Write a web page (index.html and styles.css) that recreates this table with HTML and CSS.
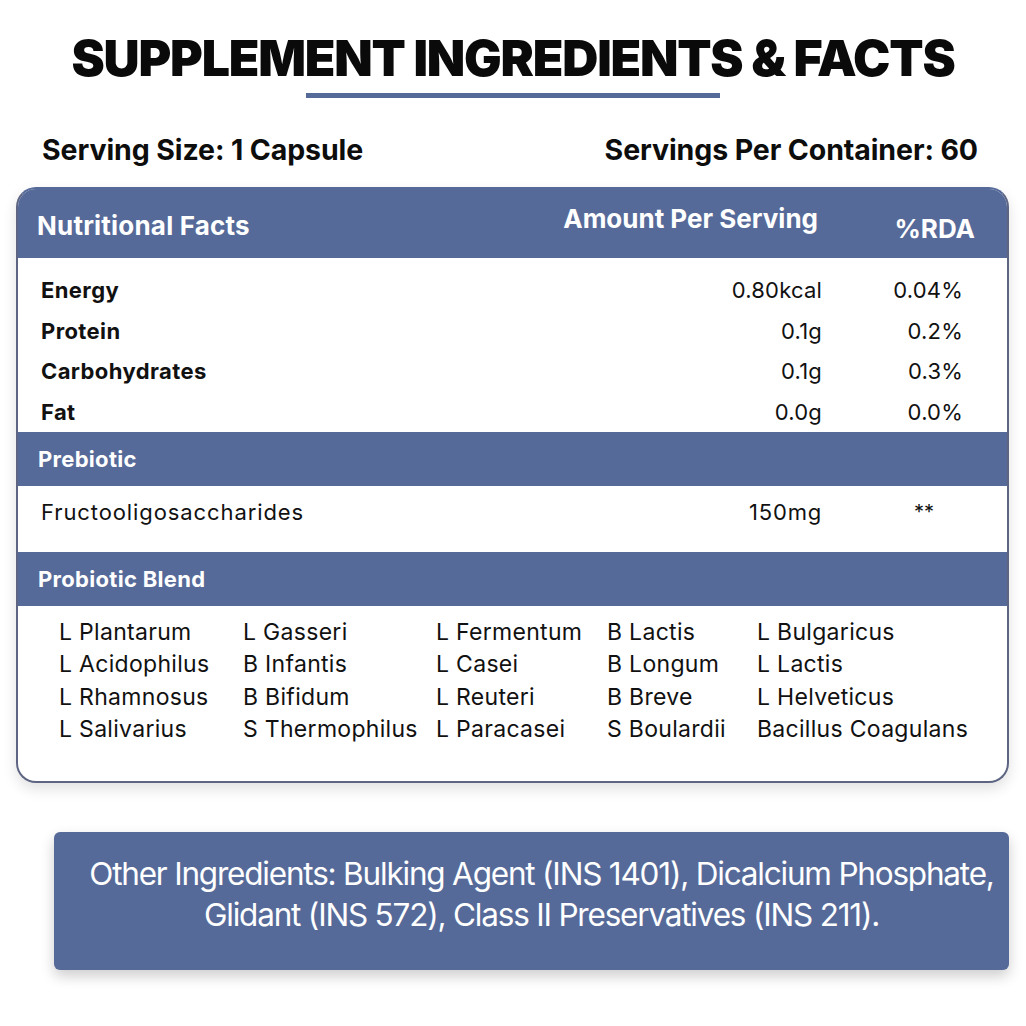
FILE: index.html
```html
<!DOCTYPE html>
<html>
<head>
<meta charset="utf-8">
<link rel="stylesheet" href="styles.css">
</head>
<body>
<div class="page">
  <h1 class="title">SUPPLEMENT INGREDIENTS &amp; FACTS</h1>
  <div class="rule"></div>
  <div class="serving">
    <span>Serving Size: 1 Capsule</span>
    <span>Servings Per Container: 60</span>
  </div>
  <div class="card">
    <div class="head">
      <span class="h-label">Nutritional Facts</span>
      <span class="h-amount">Amount Per Serving</span>
      <span class="h-rda">%RDA</span>
    </div>
    <div class="facts">
      <div class="row"><span class="lbl">Energy</span><span class="amt">0.80kcal</span><span class="rda">0.04%</span></div>
      <div class="row"><span class="lbl">Protein</span><span class="amt">0.1g</span><span class="rda">0.2%</span></div>
      <div class="row"><span class="lbl">Carbohydrates</span><span class="amt">0.1g</span><span class="rda">0.3%</span></div>
      <div class="row"><span class="lbl">Fat</span><span class="amt">0.0g</span><span class="rda">0.0%</span></div>
    </div>
    <div class="section">Prebiotic</div>
    <div class="row pre"><span class="reg">Fructooligosaccharides</span><span class="amt">150mg</span><span class="stars">**</span></div>
    <div class="section">Probiotic Blend</div>
    <div class="blend">
      <span>L Plantarum</span><span>L Gasseri</span><span>L Fermentum</span><span>B Lactis</span><span>L Bulgaricus</span>
      <span>L Acidophilus</span><span>B Infantis</span><span>L Casei</span><span>B Longum</span><span>L Lactis</span>
      <span>L Rhamnosus</span><span>B Bifidum</span><span>L Reuteri</span><span>B Breve</span><span>L Helveticus</span>
      <span>L Salivarius</span><span>S Thermophilus</span><span>L Paracasei</span><span>S Boulardii</span><span>Bacillus Coagulans</span>
    </div>
  </div>
  <div class="other">
    Other Ingredients: Bulking Agent (INS 1401), Dicalcium Phosphate,<br>
    Glidant (INS 572), Class II Preservatives (INS 211).
  </div>
</div>
</body>
</html>
```

FILE: styles.css
```css
html, body {
  margin: 0;
  padding: 0;
  background: #ffffff;
}
.page {
  width: 1026px;
  height: 1026px;
  font-family: "Inter", "Liberation Sans", sans-serif;
  color: #111;
  overflow: hidden;
}
.title {
  margin: 0;
  padding-top: 27px;
  text-align: center;
  font-size: 50px;
  line-height: 62px;
  font-weight: 900;
  letter-spacing: -1.2px;
  color: #0a0a0a;
}
.rule {
  width: 414px;
  height: 5px;
  margin: 4px 0 0 306px;
  background: #566a99;
}
.serving {
  display: flex;
  justify-content: space-between;
  padding: 0 48px 0 42px;
  margin-top: 34px;
  font-size: 28.5px;
  line-height: 36px;
  font-weight: 700;
  letter-spacing: -0.1px;
  color: #0d0d0d;
}
.card {
  margin: 19px 17px 0 16px;
  border: 2px solid #5d6583;
  border-top-color: #566a99;
  border-radius: 20px;
  overflow: hidden;
  background: #fff;
  box-shadow: 0 6px 14px rgba(0, 0, 0, 0.12);
}
.head {
  display: grid;
  grid-template-columns: 1fr 300px 157px;
  height: 69px;
  padding: 0 32px 0 19px;
  background: #566a99;
  color: #fff;
  font-weight: 700;
  font-size: 26px;
  letter-spacing: 0;
}
.h-label { align-self: center; padding-top: 4px; letter-spacing: 0.2px; }
.h-amount { text-align: right; align-self: start; padding-top: 12px; line-height: 36px; }
.h-rda { text-align: right; align-self: start; padding-top: 22px; line-height: 36px; }
.facts {
  padding: 12px 0 0 0;
}
.row {
  display: grid;
  grid-template-columns: 1fr 120px 141px;
  padding: 0 44px 0 23px;
  height: 40.5px;
  align-items: center;
  font-size: 22px;
}
.lbl { font-weight: 700; letter-spacing: 0.4px; }
.amt, .rda { text-align: right; font-weight: 400; letter-spacing: 0.2px; }
.section {
  height: 54px;
  line-height: 54px;
  padding-left: 20px;
  background: #566a99;
  color: #fff;
  font-weight: 700;
  font-size: 22px;
  letter-spacing: 0.3px;
}
.row.pre {
  height: 66px;
  align-items: start;
  padding-top: 0;
  box-sizing: border-box;
  line-height: 52px;
}
.reg { font-weight: 400; letter-spacing: 0.9px; }
.row.pre .amt { letter-spacing: 0.8px; }
.stars { text-align: left; padding-left: 92px; font-size: 20px; }
.blend {
  display: grid;
  grid-template-columns: 184px 193px 171px 150px 1fr;
  padding: 10px 0 36px 41px;
  font-size: 23px;
  line-height: 32.3px;
  letter-spacing: 0.3px;
}
.other {
  margin: 49px 17px 0 54px;
  height: 138px;
  box-sizing: border-box;
  padding: 21px 14px 0 34px;
  background: #566a99;
  border-radius: 6px;
  box-shadow: 0 6px 14px rgba(0, 0, 0, 0.2);
  color: #fff;
  text-align: center;
  font-size: 31.5px;
  line-height: 41px;
  letter-spacing: -1.2px;
  white-space: nowrap;
}
```
